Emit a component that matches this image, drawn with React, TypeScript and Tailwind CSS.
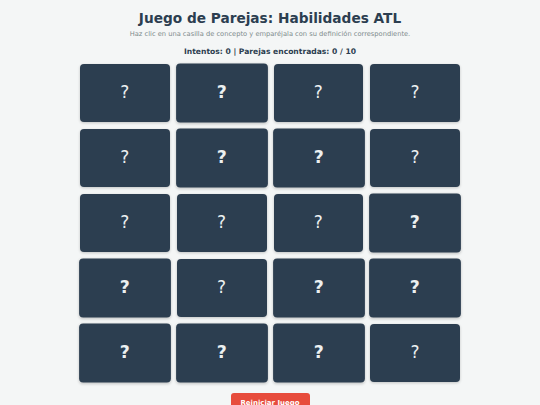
import React, { useState } from 'react';

const boldPattern = [
  false, true, false, false,
  false, true, true, false,
  false, false, false, true,
  true, false, true, true,
  true, true, true, false,
];

export default function App() {
  const [attempts] = useState(0);
  const [found] = useState(0);

  return (
    <div className="min-h-[405px] w-full bg-[#f4f6f6] text-[#2c3e50] flex flex-col items-center pt-[9px]" style={{ fontFamily: '"DejaVu Sans", Verdana, sans-serif' }}>
      <h1 className="text-[13.7px] font-bold leading-[18px]">Juego de Parejas: Habilidades ATL</h1>
      <p className="mt-[3px] text-[6.7px] leading-[9px] text-[#7f8c8d]">
        Haz clic en una casilla de concepto y emparéjala con su definición correspondiente.
      </p>
      <p className="mt-[8px] text-[7.6px] font-bold leading-[10px]">
        Intentos: {attempts} | Parejas encontradas: {found} / 10
      </p>

      <div className="mt-[7px] grid grid-cols-4 gap-[7px] w-[380px]">
        {boldPattern.map((def, i) => (
          <button
            key={i}
            className={`h-[58px] rounded-[4px] bg-[#2c3e50] text-[#ecf0f1] flex items-center justify-center shadow-[0_1px_3px_rgba(0,0,0,0.2)] ${def ? 'scale-[1.02] font-bold text-[17px]' : 'font-normal text-[17px]'}`}
          >
            ?
          </button>
        ))}
      </div>

      <button className="mt-[11px] w-[79px] h-[20px] rounded-[3px] bg-[#e74c3c] text-white text-[7px] font-bold pt-[1px]">
        Reiniciar Juego
      </button>
    </div>
  );
}
